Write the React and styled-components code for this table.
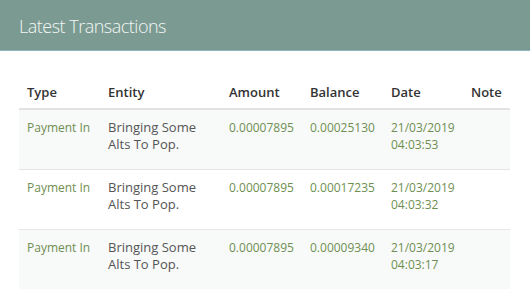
import React from "react";
import styled, { createGlobalStyle } from "styled-components";

const Global = createGlobalStyle`
  html, body { margin: 0; padding: 0; background: #fff; }
  body { font-family: "Open Sans", "Liberation Sans", sans-serif; }
`;

const Panel = styled.section`
  width: 530px;
  background: #fff;
`;

const Header = styled.header`
  height: 50px;
  background: #7b9a91;
  border-bottom: 1px solid #8fb2c4;
  display: flex;
  align-items: center;
  padding: 0 19px;
  box-sizing: content-box;
`;

const Title = styled.h2`
  margin: 0;
  font-size: 18px;
  font-weight: 300;
  letter-spacing: -0.5px;
  color: #f3f7f5;
  line-height: 24px;
  transform: translateY(1px);
`;

const Body = styled.div`
  padding: 25px 20px 0 19px;
`;

const Table = styled.table`
  width: 491px;
  border-collapse: collapse;
  table-layout: fixed;
  font-size: 12px;
  line-height: 17px;
`;

const Th = styled.th`
  box-sizing: border-box;
  text-align: left;
  font-size: 13px;
  font-weight: 600;
  color: #333;
  padding: 8px 8px 7px;
  border-bottom: 2px solid #e2e2e2;
  width: ${(p) => p.$w}px;
`;

const Row = styled.tr`
  background: ${(p) => (p.$striped ? "#f8f9f9" : "#fff")};
  border-top: 1px solid #e4e6e6;
  height: 60px;
`;

const Td = styled.td`
  vertical-align: top;
  padding: 9px 8px 0;
  font-size: ${(p) => (p.$green ? 12 : 13)}px;
  color: ${(p) => (p.$green ? "#6f8f52" : "#555")};
`;

const cols = [
  ["Type", 81],
  ["Entity", 121],
  ["Amount", 81],
  ["Balance", 81],
  ["Date", 80],
  ["Note", 47],
];

const rows = [
  { balance: "0.00025130", time: "04:03:53" },
  { balance: "0.00017235", time: "04:03:32" },
  { balance: "0.00009340", time: "04:03:17" },
];

export default function App() {
  return (
    <Panel>
      <Global />
      <Header>
        <Title>Latest Transactions</Title>
      </Header>
      <Body>
        <Table>
          <thead>
            <tr>
              {cols.map(([c, w]) => (
                <Th key={c} $w={w}>
                  {c}
                </Th>
              ))}
            </tr>
          </thead>
          <tbody>
            {rows.map((r, i) => (
              <Row key={i} $striped={i % 2 === 0}>
                <Td $green>Payment In</Td>
                <Td>Bringing Some Alts To Pop.</Td>
                <Td $green>0.00007895</Td>
                <Td $green>{r.balance}</Td>
                <Td $green>
                  21/03/2019
                  <br />
                  {r.time}
                </Td>
                <Td $green />
              </Row>
            ))}
          </tbody>
        </Table>
      </Body>
    </Panel>
  );
}
